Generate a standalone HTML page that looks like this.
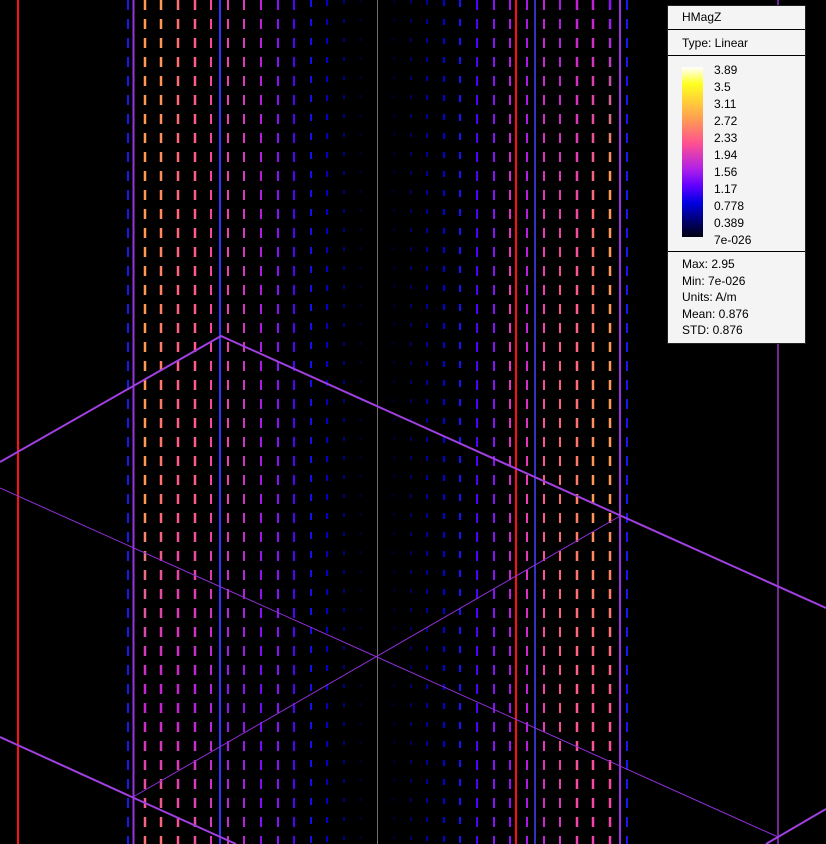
<!DOCTYPE html>
<html><head><meta charset="utf-8"><style>
html,body{margin:0;padding:0;background:#000;width:826px;height:844px;overflow:hidden}
#leg{position:absolute;left:667px;top:5px;width:137px;height:337px;background:#f4f4f4;border:1px solid #222;font-family:"Liberation Sans",sans-serif;font-size:12px;color:#000}
.r{position:absolute;left:0;width:137px;border-bottom:1px solid #000}
.t{position:absolute;left:14px;line-height:14px}
</style></head><body>
<svg width="826" height="844" style="position:absolute;left:0;top:0">
<defs>
<linearGradient id="g145" gradientUnits="userSpaceOnUse" x1="0" y1="0" x2="0" y2="844"><stop offset="0" stop-color="#ff9a55"/><stop offset=".6" stop-color="#ff9a55"/><stop offset=".83" stop-color="#c020d8"/><stop offset="1" stop-color="#ff7070"/></linearGradient>
<linearGradient id="g161" gradientUnits="userSpaceOnUse" x1="0" y1="0" x2="0" y2="844"><stop offset="0" stop-color="#ff9a55"/><stop offset=".6" stop-color="#ff7070"/><stop offset=".83" stop-color="#c020d8"/><stop offset="1" stop-color="#ff7070"/></linearGradient>
<linearGradient id="g178" gradientUnits="userSpaceOnUse" x1="0" y1="0" x2="0" y2="844"><stop offset="0" stop-color="#ff7070"/><stop offset=".6" stop-color="#ff5a8a"/><stop offset=".83" stop-color="#c020d8"/><stop offset="1" stop-color="#ff5a8a"/></linearGradient>
<linearGradient id="g195" gradientUnits="userSpaceOnUse" x1="0" y1="0" x2="0" y2="844"><stop offset="0" stop-color="#ff5a8a"/><stop offset=".6" stop-color="#ff5a8a"/><stop offset=".83" stop-color="#b020e0"/><stop offset="1" stop-color="#f050a0"/></linearGradient>
<linearGradient id="g211" gradientUnits="userSpaceOnUse" x1="0" y1="0" x2="0" y2="844"><stop offset="0" stop-color="#f84898"/><stop offset=".6" stop-color="#f848a0"/><stop offset=".83" stop-color="#b020e0"/><stop offset="1" stop-color="#e040b8"/></linearGradient>
<linearGradient id="g228" gradientUnits="userSpaceOnUse" x1="0" y1="0" x2="0" y2="844"><stop offset="0" stop-color="#f040b0"/><stop offset=".6" stop-color="#f040b0"/><stop offset=".83" stop-color="#8a10f8"/><stop offset="1" stop-color="#d030c8"/></linearGradient>
<linearGradient id="g244" gradientUnits="userSpaceOnUse" x1="0" y1="0" x2="0" y2="844"><stop offset="0" stop-color="#e038c0"/><stop offset=".6" stop-color="#d030c8"/><stop offset=".83" stop-color="#8a10f8"/><stop offset="1" stop-color="#c020d8"/></linearGradient>
<linearGradient id="g261" gradientUnits="userSpaceOnUse" x1="0" y1="0" x2="0" y2="844"><stop offset="0" stop-color="#c020d8"/><stop offset=".6" stop-color="#a818e8"/><stop offset=".83" stop-color="#7008fc"/><stop offset="1" stop-color="#8a10f8"/></linearGradient>
<linearGradient id="g510" gradientUnits="userSpaceOnUse" x1="0" y1="0" x2="0" y2="844"><stop offset="0" stop-color="#a818e8"/><stop offset=".35" stop-color="#f040b0"/><stop offset=".6" stop-color="#d030c8"/><stop offset=".83" stop-color="#a818e8"/><stop offset="1" stop-color="#8a10f8"/></linearGradient>
<linearGradient id="g527" gradientUnits="userSpaceOnUse" x1="0" y1="0" x2="0" y2="844"><stop offset="0" stop-color="#a818e8"/><stop offset=".35" stop-color="#c020d8"/><stop offset=".6" stop-color="#f040b0"/><stop offset=".83" stop-color="#c020d8"/><stop offset="1" stop-color="#a818e8"/></linearGradient>
<linearGradient id="g544" gradientUnits="userSpaceOnUse" x1="0" y1="0" x2="0" y2="844"><stop offset="0" stop-color="#c020d8"/><stop offset=".35" stop-color="#f040b0"/><stop offset=".6" stop-color="#ff5a8a"/><stop offset=".83" stop-color="#f040b0"/><stop offset="1" stop-color="#c020d8"/></linearGradient>
<linearGradient id="g560" gradientUnits="userSpaceOnUse" x1="0" y1="0" x2="0" y2="844"><stop offset="0" stop-color="#a818e8"/><stop offset=".35" stop-color="#ff5090"/><stop offset=".6" stop-color="#ff7070"/><stop offset=".83" stop-color="#ff5090"/><stop offset="1" stop-color="#d030c8"/></linearGradient>
<linearGradient id="g577" gradientUnits="userSpaceOnUse" x1="0" y1="0" x2="0" y2="844"><stop offset="0" stop-color="#c020d8"/><stop offset=".35" stop-color="#ff5a8a"/><stop offset=".6" stop-color="#ff8060"/><stop offset=".83" stop-color="#ff5a8a"/><stop offset="1" stop-color="#f040b0"/></linearGradient>
<linearGradient id="g593" gradientUnits="userSpaceOnUse" x1="0" y1="0" x2="0" y2="844"><stop offset="0" stop-color="#c020d8"/><stop offset=".25" stop-color="#ff7070"/><stop offset=".6" stop-color="#ff9a55"/><stop offset=".83" stop-color="#ff5a8a"/><stop offset="1" stop-color="#f040b0"/></linearGradient>
<linearGradient id="g610" gradientUnits="userSpaceOnUse" x1="0" y1="0" x2="0" y2="844"><stop offset="0" stop-color="#8a10f8"/><stop offset=".2" stop-color="#ff9a55"/><stop offset=".6" stop-color="#ff9a55"/><stop offset=".83" stop-color="#ff5a8a"/><stop offset="1" stop-color="#f040b0"/></linearGradient>
</defs>
<g stroke-dasharray="10 9" fill="none">
<line x1="128" y1="0" x2="128" y2="844" stroke="#1818f0" stroke-width="2"/>
<line x1="145" y1="0" x2="145" y2="844" stroke="url(#g145)" stroke-width="2.5"/>
<line x1="161" y1="0" x2="161" y2="844" stroke="url(#g161)" stroke-width="2.5"/>
<line x1="178" y1="0" x2="178" y2="844" stroke="url(#g178)" stroke-width="2.5"/>
<line x1="195" y1="0" x2="195" y2="844" stroke="url(#g195)" stroke-width="2.5"/>
<line x1="211" y1="0" x2="211" y2="844" stroke="url(#g211)" stroke-width="2"/>
<line x1="228" y1="0" x2="228" y2="844" stroke="url(#g228)" stroke-width="2"/>
<line x1="244" y1="0" x2="244" y2="844" stroke="url(#g244)" stroke-width="2"/>
<line x1="261" y1="0" x2="261" y2="844" stroke="url(#g261)" stroke-width="2"/>
<line x1="278" y1="0" x2="278" y2="844" stroke="#8a10f8" stroke-width="2"/>
<line x1="294" y1="0" x2="294" y2="844" stroke="#5000ff" stroke-width="2"/>
<line x1="311" y1="0" x2="311" y2="844" stroke="#1010f0" stroke-width="2" stroke-dasharray="7 12"/>
<line x1="327" y1="0" x2="327" y2="844" stroke="#0000c8" stroke-width="2" stroke-dasharray="6 13"/>
<line x1="344" y1="0" x2="344" y2="844" stroke="#000080" stroke-width="2" stroke-dasharray="4 15"/>
<line x1="361" y1="0" x2="361" y2="844" stroke="#000038" stroke-width="2" stroke-dasharray="3 16"/>
<line x1="394" y1="0" x2="394" y2="844" stroke="#000038" stroke-width="2" stroke-dasharray="3 16"/>
<line x1="411" y1="0" x2="411" y2="844" stroke="#000060" stroke-width="2" stroke-dasharray="4 15"/>
<line x1="427" y1="0" x2="427" y2="844" stroke="#0000a0" stroke-width="2" stroke-dasharray="5 14"/>
<line x1="444" y1="0" x2="444" y2="844" stroke="#0000d8" stroke-width="2" stroke-dasharray="6 13"/>
<line x1="460" y1="0" x2="460" y2="844" stroke="#1a10ff" stroke-width="2" stroke-dasharray="7 12"/>
<line x1="477" y1="0" x2="477" y2="844" stroke="#5000ff" stroke-width="2"/>
<line x1="494" y1="0" x2="494" y2="844" stroke="#8a10f8" stroke-width="2"/>
<line x1="510" y1="0" x2="510" y2="844" stroke="url(#g510)" stroke-width="2"/>
<line x1="527" y1="0" x2="527" y2="844" stroke="url(#g527)" stroke-width="2"/>
<line x1="544" y1="0" x2="544" y2="844" stroke="url(#g544)" stroke-width="2"/>
<line x1="560" y1="0" x2="560" y2="844" stroke="url(#g560)" stroke-width="2"/>
<line x1="577" y1="0" x2="577" y2="844" stroke="url(#g577)" stroke-width="2.5"/>
<line x1="593" y1="0" x2="593" y2="844" stroke="url(#g593)" stroke-width="2.5"/>
<line x1="610" y1="0" x2="610" y2="844" stroke="url(#g610)" stroke-width="2.5"/>
<line x1="627" y1="0" x2="627" y2="844" stroke="#1818f0" stroke-width="2"/>
</g>
<g fill="none">
<line x1="18" y1="0" x2="18" y2="844" stroke="#ff1010" stroke-width="2"/>
<line x1="133.5" y1="0" x2="133.5" y2="844" stroke="#9933dd" stroke-width="2"/>
<line x1="220" y1="0" x2="220" y2="844" stroke="#3333ff" stroke-width="2"/>
<line x1="377.5" y1="0" x2="377.5" y2="844" stroke="#707070" stroke-width="1"/>
<line x1="516" y1="0" x2="516" y2="844" stroke="#ff1010" stroke-width="2"/>
<line x1="535" y1="0" x2="535" y2="844" stroke="#4444ff" stroke-width="1.5"/>
<line x1="620" y1="0" x2="620" y2="844" stroke="#9933dd" stroke-width="2"/>
<line x1="778" y1="0" x2="778" y2="844" stroke="#9933cc" stroke-width="1.5"/>
<polyline points="0,462 221,336 826,608" stroke="#a040e0" stroke-width="2"/>
<polyline points="0,488 377,657 778,837" stroke="#9030d8" stroke-width="1"/>
<line x1="133" y1="797" x2="620" y2="516" stroke="#9030d8" stroke-width="1"/>
<polyline points="0,737 134,798 236,844" stroke="#a040e0" stroke-width="2"/>
<line x1="766" y1="844" x2="826" y2="809" stroke="#a040e0" stroke-width="2"/>
</g>
</svg>
<div id="leg">
<div class="r" style="top:0;height:23px"></div><div class="t" style="top:4px">HMagZ</div>
<div class="r" style="top:24px;height:25px"></div><div class="t" style="top:30px">Type: Linear</div>
<div class="r" style="top:50px;height:195px"></div>
<div style="position:absolute;left:14px;top:61px;width:21px;height:170px;background:linear-gradient(to bottom,#ffffff 0%,#ffff20 10%,#ffa050 30%,#ff5090 45%,#b020e8 60%,#6000ff 70%,#0000e0 80%,#000060 92%,#000010 100%)"></div>
<div style="position:absolute;left:46px;top:56px;line-height:17px;font-size:12px">3.89<br>3.5<br>3.11<br>2.72<br>2.33<br>1.94<br>1.56<br>1.17<br>0.778<br>0.389<br>7e-026</div>
<div class="t" style="top:250px;line-height:16.5px">Max: 2.95<br>Min: 7e-026<br>Units: A/m<br>Mean: 0.876<br>STD: 0.876</div>
</div>
</body></html>
